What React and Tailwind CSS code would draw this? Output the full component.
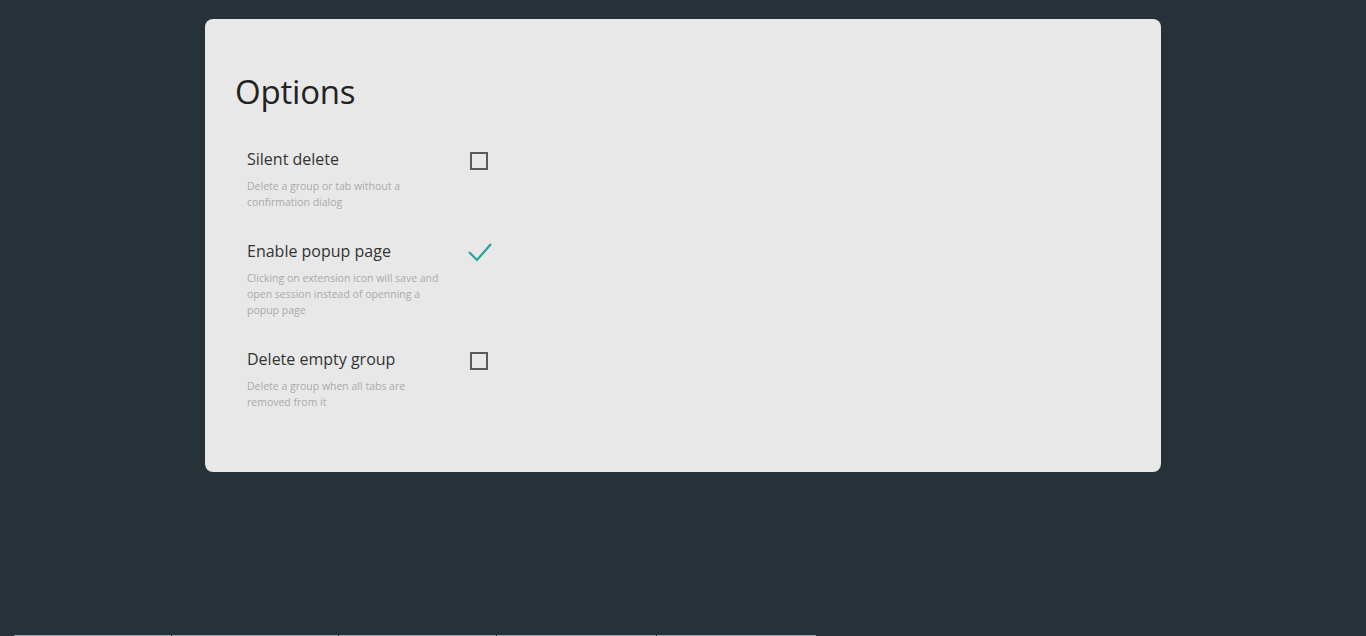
import React, { useState } from "react";

const OPTIONS = [
  {
    id: "silentDelete",
    label: "Silent delete",
    description: "Delete a group or tab without a confirmation dialog",
    checked: false,
  },
  {
    id: "enablePopup",
    label: "Enable popup page",
    description:
      "Clicking on extension icon will save and open session instead of openning a popup page",
    checked: true,
  },
  {
    id: "deleteEmptyGroup",
    label: "Delete empty group",
    description: "Delete a group when all tabs are removed from it",
    checked: false,
  },
];

const Checkbox = ({ checked, onChange }) => (
  <button
    type="button"
    onClick={onChange}
    className="mt-[5px] flex h-[20px] w-[26px] items-start justify-start"
  >
    {checked ? (
      <svg width="26" height="22" viewBox="0 0 26 22" className="-mt-[3px] -ml-[3px]">
        <polyline
          points="2,11 10,19 24,3"
          fill="none"
          stroke="#26a69a"
          strokeWidth="2.2"
        />
      </svg>
    ) : (
      <span className="block h-[18px] w-[18px] border-2 border-[#5a5a5a]" />
    )}
  </button>
);

const App = () => {
  const [options, setOptions] = useState(OPTIONS);

  const toggle = (id) => {
    setOptions(
      options.map((o) => (o.id === id ? { ...o, checked: !o.checked } : o))
    );
  };

  return (
    <div
      className="relative h-[636px] overflow-hidden bg-[#263238] pt-[19px]"
      style={{ fontFamily: '"Open Sans", "Noto Sans", sans-serif' }}
    >
      <div className="mx-auto w-[956px] rounded-[8px] bg-[#e8e8e8] pt-[51px] pb-[62px] pl-[30px]">
        <h1 className="text-[33px] leading-[44px] font-normal tracking-[-0.2px] text-[#222]">
          Options
        </h1>
        <div className="mt-[33px] flex flex-col gap-[29px] pl-[12px]">
          {options.map((o) => (
            <div key={o.id} className="flex items-start gap-[27px]">
              <div className="w-[196px]">
                <div className="text-[16px] leading-[24px] text-[#333]">
                  {o.label}
                </div>
                <div className="mt-[7px] text-[10.5px] leading-[16px] text-[#aaa]">
                  {o.description}
                </div>
              </div>
              <Checkbox checked={o.checked} onChange={() => toggle(o.id)} />
            </div>
          ))}
        </div>
      </div>
      <div className="absolute bottom-0 left-[14px] flex h-px gap-px">
        <div className="w-[157px] bg-[#9ea3a6]" />
        <div className="w-[166px] bg-[#9ea3a6]" />
        <div className="w-[157px] bg-[#9ea3a6]" />
        <div className="w-[159px] bg-[#9ea3a6]" />
        <div className="w-[159px] bg-[#9ea3a6]" />
      </div>
    </div>
  );
};

export default App;
